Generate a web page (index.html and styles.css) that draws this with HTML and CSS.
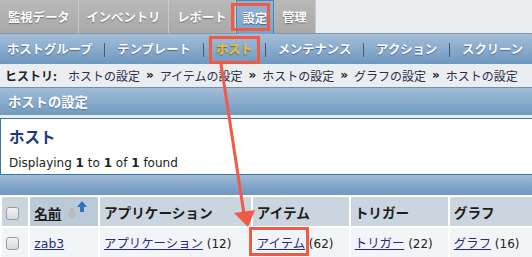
FILE: index.html
```html
<!DOCTYPE html>
<html lang="ja">
<head>
<meta charset="utf-8">
<title>ホスト</title>
<link rel="stylesheet" href="styles.css">
</head>
<body>
<div class="page">
  <nav class="tabs">
    <a class="tab">監視データ</a>
    <a class="tab">インベントリ</a>
    <a class="tab">レポート</a>
    <a class="tab active">設定</a>
    <a class="tab">管理</a>
  </nav>
  <nav class="submenu">
    <a>ホストグループ</a><span class="sep"></span>
    <a>テンプレート</a><span class="sep"></span>
    <a class="current">ホスト</a><span class="sep"></span>
    <a>メンテナンス</a><span class="sep"></span>
    <a>アクション</a><span class="sep"></span>
    <a>スクリーン</a>
  </nav>
  <div class="history">
    <b class="history-label">ヒストリ:</b><a>ホストの設定</a><span class="raquo">»</span><a>アイテムの設定</a><span class="raquo">»</span><a>ホストの設定</a><span class="raquo">»</span><a>グラフの設定</a><span class="raquo">»</span><a>ホストの設定</a>
  </div>
  <div class="title-bar">ホストの設定</div>
  <div class="box">
    <h1 class="box-title">ホスト</h1>
    <p class="box-info">Displaying <b>1</b> to <b>1</b> of <b>1</b> found</p>
  </div>
  <div class="bar"></div>
  <table class="list">
    <colgroup>
      <col class="c-cb"><col class="c-name"><col class="c-app"><col class="c-item"><col class="c-trig"><col class="c-graph"><col class="c-more">
    </colgroup>
    <thead>
      <tr>
        <th class="cb-cell"><span class="checkbox"></span></th>
        <th class="sorted"><a class="sort-link">名前</a><svg class="sort-icon" width="22" height="20" viewBox="0 0 22 20"><path d="M3 7h4v5h3l-5 6-5-6h3z" fill="#b9b9b9"/><path d="M15 0l5 6h-3v5h-4V6h-3z" fill="#2f72c0"/></svg></th>
        <th>アプリケーション</th>
        <th>アイテム</th>
        <th>トリガー</th>
        <th>グラフ</th>
        <th></th>
      </tr>
    </thead>
    <tbody>
      <tr>
        <td class="cb-cell"><span class="checkbox"></span></td>
        <td><a class="link">zab3</a></td>
        <td><a class="link">アプリケーション</a> (12)</td>
        <td><a class="link">アイテム</a> (62)</td>
        <td><a class="link">トリガー</a> (22)</td>
        <td><a class="link">グラフ</a> (16)</td>
        <td></td>
      </tr>
    </tbody>
  </table>
  <svg class="annot" width="532" height="257" viewBox="0 0 532 257">
    <g fill="none" stroke="#ef5b45" stroke-width="3">
      <rect x="232.5" y="4.5" width="36" height="25"/>
      <rect x="210.5" y="37.5" width="48" height="25"/>
      <rect x="250.5" y="228.5" width="57" height="26"/>
      <line x1="221" y1="64" x2="244" y2="214"/>
    </g>
    <path d="M234 213 L255 210 L248 227 Z" fill="#ef5b45"/>
  </svg>
</div>
</body>
</html>
```

FILE: styles.css
```css
html, body {
  margin: 0;
  padding: 0;
  overflow: hidden;
  background: #ebeef1;
}
body {
  font-family: "DejaVu Sans", "Noto Sans CJK JP", sans-serif;
  font-size: 12px;
  color: #222;
}
.page {
  position: relative;
  width: 532px;
  height: 257px;
  overflow: hidden;
}
a { cursor: pointer; }

/* top tabs */
.tabs {
  display: flex;
  height: 33px;
  border-bottom: 1px solid #8397a9;
}
.tab {
  display: flex;
  align-items: center;
  padding: 0 8px;
  border-right: 1px solid #c9c9c9;
  background: linear-gradient(#b9b9b9, #a9a9a9);
  color: #fff;
  font-family: "Noto Sans CJK JP", sans-serif;
  font-weight: 700;
  font-size: 12.3px;
  text-shadow: 0 1px 1px #6f6f6f;
}
.tab.active {
  margin-bottom: -1px;
  border: 1px solid #4d85b8;
  border-bottom: none;
  padding: 0 6px;
  background: linear-gradient(#94b5d3, #7aa2c8);
  text-shadow: 0 1px 1px #3f5f80;
}

/* sub menu */
.submenu {
  display: flex;
  align-items: center;
  height: 30px;
  padding-left: 7px;
  background: linear-gradient(#a4bfd8, #89abcd 50%, #6f98c0);
}
.submenu a {
  color: #fff;
  font-family: "Noto Sans CJK JP", sans-serif;
  font-weight: 700;
  font-size: 12.3px;
  text-shadow: 0 1px 1px #45698f;
  white-space: nowrap;
}
.submenu a.current {
  color: #f7bd1a;
}
.sep {
  flex: none;
  width: 1px;
  height: 14px;
  margin: 1px 12px 0;
  background: #3d5c8c;
}

/* history */
.history {
  display: flex;
  align-items: center;
  height: 22px;
  padding-left: 5px;
  color: #2a2e48;
  font-family: "Noto Sans CJK JP", sans-serif;
  font-size: 12px;
  white-space: nowrap;
}
.history-label {
  margin-right: 11px;
  color: #222;
}
.raquo {
  margin: 0 6px;
  font-family: "DejaVu Sans", sans-serif;
  font-weight: 700;
  color: #222;
}

/* title bar */
.title-bar {
  margin-top: 1px;
  height: 27px;
  padding-left: 8px;
  border-top: 1px solid #6e90b2;
  display: flex;
  align-items: center;
  color: #fff;
  font-family: "Noto Sans CJK JP", sans-serif;
  font-weight: 700;
  font-size: 13.3px;
  text-shadow: 0 1px 1px #55779b;
  background: linear-gradient(#a2bdd7, #89abcd 50%, #719ac1);
}

.box {
  margin-top: 3px;
  height: 55px;
  border: 1px solid #3b78a5;
  border-right: none;
  background: #fff;
  padding: 0 8px;
}
.box-title {
  margin: 6px 0 0;
  height: 22px;
  line-height: 22px;
  font-family: "Noto Sans CJK JP", sans-serif;
  font-size: 15.5px;
  font-weight: 700;
  color: #1e3b78;
}
.box-info {
  margin: 9px 0 0;
  font-size: 12px;
  color: #222;
}

.bar {
  height: 20px;
  background: linear-gradient(#a2bdd7, #7ea3c7 60%, #7099c1);
}

/* table */
.list {
  table-layout: fixed;
  width: 640px;
  border-collapse: separate;
  border-spacing: 2px;
  background: #fff;
}
.c-cb { width: 26px; }
.c-name { width: 67px; }
.c-app { width: 149px; }
.c-item { width: 95px; }
.c-trig { width: 96px; }
.c-graph { width: 84px; }
.c-more { width: 100px; }
.list th {
  height: 29px;
  padding: 0 4px;
  text-align: left;
  vertical-align: middle;
  background: #cbd5df;
  font-family: "Noto Sans CJK JP", sans-serif;
  font-size: 13.6px;
  font-weight: 700;
  color: #1d1d1d;
  white-space: nowrap;
}
.list th.sorted {
  background: #bccad7;
}
.list td {
  height: 30px;
  padding: 0 4px;
  background: #f1f5f8;
  white-space: nowrap;
  font-size: 12px;
}
.list .cb-cell {
  padding: 0 0 0 4px;
}
.sort-link {
  text-decoration: underline;
  color: #1d1d1d;
}
.sort-icon {
  vertical-align: -2px;
  margin-left: 6px;
}
.link {
  color: #2b2a7e;
  text-decoration: underline;
  font-family: "DejaVu Sans", "Noto Sans CJK JP", sans-serif;
  font-size: 12.4px;
}
.checkbox {
  display: inline-block;
  width: 11px;
  height: 11px;
  border: 1px solid #9b9b9b;
  border-radius: 3px;
  background: linear-gradient(#f4f4f4, #d9d9d9);
  vertical-align: middle;
}

.annot {
  position: absolute;
  left: 0;
  top: 0;
  pointer-events: none;
}
```
